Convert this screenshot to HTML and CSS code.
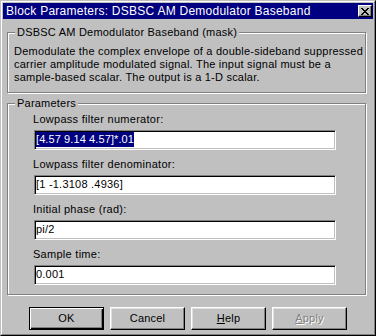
FILE: index.html
```html
<!DOCTYPE html>
<html>
<head>
<meta charset="utf-8">
<title>Block Parameters</title>
<link rel="stylesheet" href="styles.css">
</head>
<body>
<div class="window">
  <div class="frame">
    <div class="titlebar">
      <span class="title">Block Parameters: DSBSC AM Demodulator Baseband</span>
      <span class="close"><svg width="8" height="7" viewBox="0 0 8 7" shape-rendering="crispEdges"><path fill="#000" d="M0 0h2v1H0zM6 0h2v1H6zM1 1h2v1H1zM5 1h2v1H5zM2 2h4v1H2zM3 3h2v1H3zM2 4h4v1H2zM1 5h2v1H1zM5 5h2v1H5zM0 6h2v1H0zM6 6h2v1H6z"/></svg></span>
    </div>
    <div class="body">
      <fieldset class="group group-desc">
        <legend>DSBSC AM Demodulator Baseband (mask)</legend>
        <p class="desc">Demodulate the complex envelope of a double-sideband suppressed<br>carrier amplitude modulated signal. The input signal must be a<br>sample-based scalar. The output is a 1-D scalar.</p>
      </fieldset>
      <fieldset class="group group-params">
        <legend>Parameters</legend>
        <div class="param">
          <div class="label">Lowpass filter numerator:</div>
          <div class="field"><span class="sel">[4.57 9.14 4.57]*.01</span></div>
        </div>
        <div class="param">
          <div class="label">Lowpass filter denominator:</div>
          <div class="field">[1 -1.3108 .4936]</div>
        </div>
        <div class="param">
          <div class="label">Initial phase (rad):</div>
          <div class="field">pi/2</div>
        </div>
        <div class="param">
          <div class="label">Sample time:</div>
          <div class="field">0.001</div>
        </div>
      </fieldset>
      <div class="buttons">
        <button class="btn default">OK</button>
        <button class="btn">Cancel</button>
        <button class="btn"><u>H</u>elp</button>
        <button class="btn disabled"><u>A</u>pply</button>
      </div>
    </div>
  </div>
</div>
</body>
</html>
```

FILE: styles.css
```css
* { box-sizing: border-box; }
html, body { margin: 0; padding: 0; background: #c0c0c0; }
body {
  font-family: "Liberation Sans", Arial, sans-serif;
  font-size: 11px;
  line-height: 13px;
  letter-spacing: 0.22px;
  color: #000;
}
.window {
  width: 376px;
  height: 336px;
  border: 1px solid;
  border-color: #c0c0c0 #000 #000 #c0c0c0;
  background: #c0c0c0;
}
.frame {
  height: 100%;
  border: 1px solid;
  border-color: #fff #808080 #808080 #fff;
  padding: 1px;
  display: flex;
  flex-direction: column;
}
.titlebar {
  height: 16px;
  background: #000080;
  color: #fff;
  display: flex;
  align-items: center;
  justify-content: space-between;
  padding: 0 1px 0 3px;
}
.title {
  font-size: 12px;
  line-height: 16px;
  letter-spacing: 0.25px;
  white-space: nowrap;
}
.close {
  width: 14px;
  height: 12px;
  background: #c0c0c0;
  border: 1px solid;
  border-color: #fff #000 #000 #fff;
  box-shadow: inset -1px -1px #808080;
  display: flex;
  align-items: center;
  justify-content: center;
}
.close svg { display: block; }
.body { padding-top: 7px; }
.group {
  margin: 0 0 0 4px;
  padding: 0;
  border: 1px solid #808080;
  box-shadow: inset 1px 1px #fff, 1px 1px #fff;
  width: 359px;
  min-width: 0;
}
.group legend {
  margin-left: 7px;
  padding: 0 2px;
  font-size: 11px;
  line-height: 13px;
  background: #c0c0c0;
}
.desc {
  margin: 0;
  padding: 6px 0 8px 6px;
  white-space: nowrap;
}
.group-params {
  margin-top: 4px;
  padding: 3px 0 9px 0;
}
.param { margin-left: 26px; }
.param + .param { margin-top: 8px; }
.label { margin-bottom: 4px; margin-left: -1px; letter-spacing: 0.28px; }
.field {
  width: 302px;
  height: 20px;
  background: #fff;
  border: 1px solid;
  border-color: #808080 #fff #fff #808080;
  box-shadow: inset 1px 1px #000, inset -1px -1px #c0c0c0;
  padding: 1px 1px 0;
  line-height: 15px;
  white-space: nowrap;
}
.sel {
  display: inline-block;
  background: #000080;
  color: #fff;
  line-height: 15px;
  letter-spacing: 0.1px;
}
.buttons {
  display: flex;
  justify-content: center;
  gap: 6px;
  margin-top: 12px;
}
.btn {
  width: 75px;
  height: 23px;
  padding: 0;
  font: inherit;
  font-size: 11px;
  letter-spacing: 0.22px;
  color: #000;
  background: #c0c0c0;
  border: 1px solid;
  border-color: #fff #000 #000 #fff;
  box-shadow: inset -1px -1px #808080, inset 1px 1px #dfdfdf;
  border-radius: 0;
}
.btn.default {
  border-color: #000;
  box-shadow: inset 1px 1px #fff, inset -1px -1px #000, inset -2px -2px #808080;
}
.btn.disabled {
  color: #808080;
  text-shadow: 1px 1px 0 #fff;
}
```
